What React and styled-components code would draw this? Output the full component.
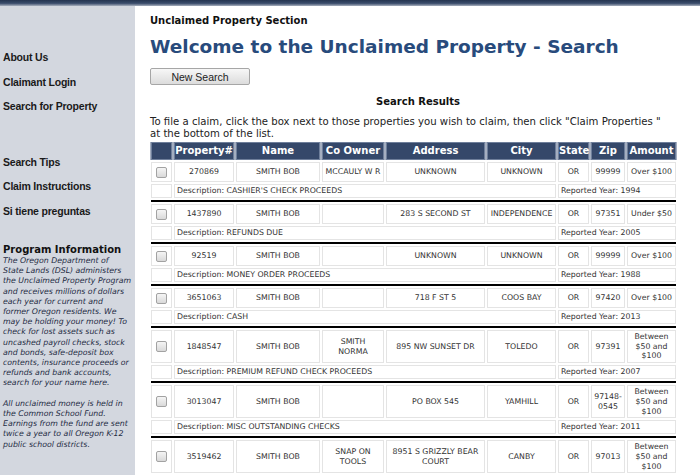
import React from 'react';
import styled, { createGlobalStyle } from 'styled-components';

const Global = createGlobalStyle`
  html, body { margin: 0; padding: 0; background: #fff; }
  body { font-family: "DejaVu Sans", Verdana, sans-serif; color: #000; }
`;

const Page = styled.div`
  display: flex;
  flex-direction: column;
  min-height: 100vh;
`;

const TopBar = styled.div`
  height: 6px;
  background: linear-gradient(#24344f 0%, #3a4c6b 55%, #a7afbd 100%);
`;

const Body = styled.div`
  display: flex;
  flex: 1;
`;

const Sidebar = styled.aside`
  width: 135px;
  flex-shrink: 0;
  background: #d3d7df;
  padding-top: 39px;
  box-sizing: border-box;
`;

const NavGroup = styled.nav`
  display: flex;
  flex-direction: column;
  margin-top: ${p => p.$gap || 0}px;
`;

const NavLink = styled.a`
  display: block;
  height: 24.5px;
  line-height: 24.5px;
  padding-left: 3px;
  font-family: "Liberation Sans", Arial, sans-serif;
  font-weight: bold;
  font-size: 10.5px;
  letter-spacing: -0.2px;
  color: #1a1a1a;
  text-decoration: none;
`;

const InfoTitle = styled.h3`
  margin: 20px 0 0;
  padding-left: 3px;
  font-size: 10px;
  line-height: 13px;
  font-weight: bold;
  color: #111;
`;

const InfoText = styled.p`
  margin: ${p => (p.$first ? '0' : '10.2px')} 0 0;
  padding: 0 0 0 3px;
  font-size: 7.8px;
  line-height: 10.2px;
  font-style: italic;
  white-space: nowrap;
  color: #1f2c44;
`;

const Main = styled.main`
  flex: 1;
  padding: 7.5px 14px 0 15px;
  min-width: 0;
`;

const SectionLabel = styled.div`
  font-size: 10px;
  font-weight: bold;
  line-height: 13px;
  color: #111;
`;

const Title = styled.h1`
  margin: 8.5px 0 0;
  font-size: 18.5px;
  line-height: 24px;
  font-weight: bold;
  color: #284b7c;
`;

const Button = styled.button`
  display: block;
  margin-top: 9px;
  width: 100px;
  height: 17px;
  padding: 0;
  border: 1px solid #a6a6a6;
  border-radius: 2px;
  background: linear-gradient(#f7f7f7, #dcdcdc);
  font-family: "Liberation Sans", Arial, sans-serif;
  font-size: 10.5px;
  color: #222;
`;

const ResultsTitle = styled.div`
  margin-top: 9.5px;
  text-align: center;
  font-size: 10px;
  font-weight: bold;
  line-height: 13px;
  color: #111;
`;

const Instructions = styled.p`
  margin: 8.5px 0 0;
  font-size: 10.15px;
  line-height: 12px;
  color: #222;
`;

const Table = styled.table`
  margin-left: -1px;
  border-collapse: separate;
  border-spacing: 2px;
  table-layout: fixed;
  width: 529px;
`;

const Th = styled.th`
  padding: 0;
  height: 18px;
  box-sizing: border-box;
  background: #35486a;
  border: 1px solid #6f7f9b;
  box-shadow: 1px 0 0 #a4aec0, -1px 0 0 #a4aec0;
  color: #fff;
  font-size: 10px;
  font-weight: bold;
  line-height: 16px;
  text-align: center;
  white-space: nowrap;
`;

const Td = styled.td`
  padding: 1px 2px;
  height: 20px;
  box-sizing: border-box;
  border: 1px solid #e4e4e4;
  font-size: 7.8px;
  line-height: 9.7px;
  color: #333;
  text-align: center;
  vertical-align: middle;
`;

const DescTd = styled.td`
  padding: 0 2px;
  height: 14px;
  box-sizing: border-box;
  border: 1px solid #e4e4e4;
  font-size: 7.8px;
  line-height: 12px;
  color: #333;
  text-align: left;
  white-space: nowrap;
  overflow: hidden;
`;

const SepTd = styled.td`
  padding: 0;
  height: 2px;
  background: #000;
`;

const Check = styled.input.attrs({ type: 'checkbox' })`
  appearance: none;
  display: block;
  margin: 0 auto;
  width: 11px;
  height: 11px;
  border: 1px solid #a2a2a2;
  border-radius: 2px;
  background: linear-gradient(#f5f5f5, #d9d9d9);
`;

const cols = [21, 60, 84, 62, 99, 69, 31, 34, 49];

const records = [
  ['270869', 'SMITH BOB', 'MCCAULY W R', 'UNKNOWN', 'UNKNOWN', 'OR', '99999', 'Over $100', "CASHIER'S CHECK PROCEEDS", '1994'],
  ['1437890', 'SMITH BOB', '', '283 S SECOND ST', 'INDEPENDENCE', 'OR', '97351', 'Under $50', 'REFUNDS DUE', '2005'],
  ['92519', 'SMITH BOB', '', 'UNKNOWN', 'UNKNOWN', 'OR', '99999', 'Over $100', 'MONEY ORDER PROCEEDS', '1988'],
  ['3651063', 'SMITH BOB', '', '718 F ST 5', 'COOS BAY', 'OR', '97420', 'Over $100', 'CASH', '2013'],
  ['1848547', 'SMITH BOB', 'SMITH NORMA', '895 NW SUNSET DR', 'TOLEDO', 'OR', '97391', 'Between $50 and $100', 'PREMIUM REFUND CHECK PROCEEDS', '2007'],
  ['3013047', 'SMITH BOB', '', 'PO BOX 545', 'YAMHILL', 'OR', '97148-0545', 'Between $50 and $100', 'MISC OUTSTANDING CHECKS', '2011'],
  ['3519462', 'SMITH BOB', 'SNAP ON TOOLS', '8951 S GRIZZLY BEAR COURT', 'CANBY', 'OR', '97013', 'Between $50 and $100', 'CUSTOMER OVERPAYMENTS', '2012'],
];

const headers = ['', 'Property#', 'Name', 'Co Owner', 'Address', 'City', 'State', 'Zip', 'Amount'];

const infoPara1 = [
  'The Oregon Department of',
  'State Lands (DSL) administers',
  'the Unclaimed Property Program',
  'and receives millions of dollars',
  'each year for current and',
  'former Oregon residents. We',
  'may be holding your money! To',
  'check for lost assets such as',
  'uncashed payroll checks, stock',
  'and bonds, safe-deposit box',
  'contents, insurance proceeds or',
  'refunds and bank accounts,',
  'search for your name here.',
];

const infoPara2 = [
  'All unclaimed money is held in',
  'the Common School Fund.',
  'Earnings from the fund are sent',
  'twice a year to all Oregon K-12',
  'public school districts.',
];

const Lines = ({ lines }) =>
  lines.map((l, i) => (
    <React.Fragment key={i}>
      {l}
      {i < lines.length - 1 && <br />}
    </React.Fragment>
  ));

export default function App() {
  return (
    <Page>
      <Global />
      <TopBar />
      <Body>
        <Sidebar>
          <NavGroup>
            <NavLink>About Us</NavLink>
            <NavLink>Claimant Login</NavLink>
            <NavLink>Search for Property</NavLink>
          </NavGroup>
          <NavGroup $gap={31}>
            <NavLink>Search Tips</NavLink>
            <NavLink>Claim Instructions</NavLink>
            <NavLink>Si tiene preguntas</NavLink>
          </NavGroup>
          <InfoTitle>Program Information</InfoTitle>
          <InfoText $first>
            <Lines lines={infoPara1} />
          </InfoText>
          <InfoText>
            <Lines lines={infoPara2} />
          </InfoText>
        </Sidebar>
        <Main>
          <SectionLabel>Unclaimed Property Section</SectionLabel>
          <Title>Welcome to the Unclaimed Property - Search</Title>
          <Button>New Search</Button>
          <ResultsTitle>Search Results</ResultsTitle>
          <Instructions>
            To file a claim, click the box next to those properties you wish to claim, then click
            "Claim Properties "
            <br />
            at the bottom of the list.
          </Instructions>
          <Table>
            <colgroup>
              {cols.map((w, i) => (
                <col key={i} style={{ width: w }} />
              ))}
            </colgroup>
            <thead>
              <tr>
                {headers.map((h, i) => (
                  <Th key={i}>{h}</Th>
                ))}
              </tr>
            </thead>
            <tbody>
              {records.map((r, idx) => (
                <React.Fragment key={idx}>
                  <tr>
                    <Td>
                      <Check />
                    </Td>
                    {r.slice(0, 8).map((v, i) => (
                      <Td key={i}>{v}</Td>
                    ))}
                  </tr>
                  <tr>
                    <DescTd />
                    <DescTd colSpan={5}>Description: {r[8]}</DescTd>
                    <DescTd colSpan={3}>Reported Year: {r[9]}</DescTd>
                  </tr>
                  <tr>
                    <SepTd colSpan={9} />
                  </tr>
                </React.Fragment>
              ))}
            </tbody>
          </Table>
        </Main>
      </Body>
    </Page>
  );
}
